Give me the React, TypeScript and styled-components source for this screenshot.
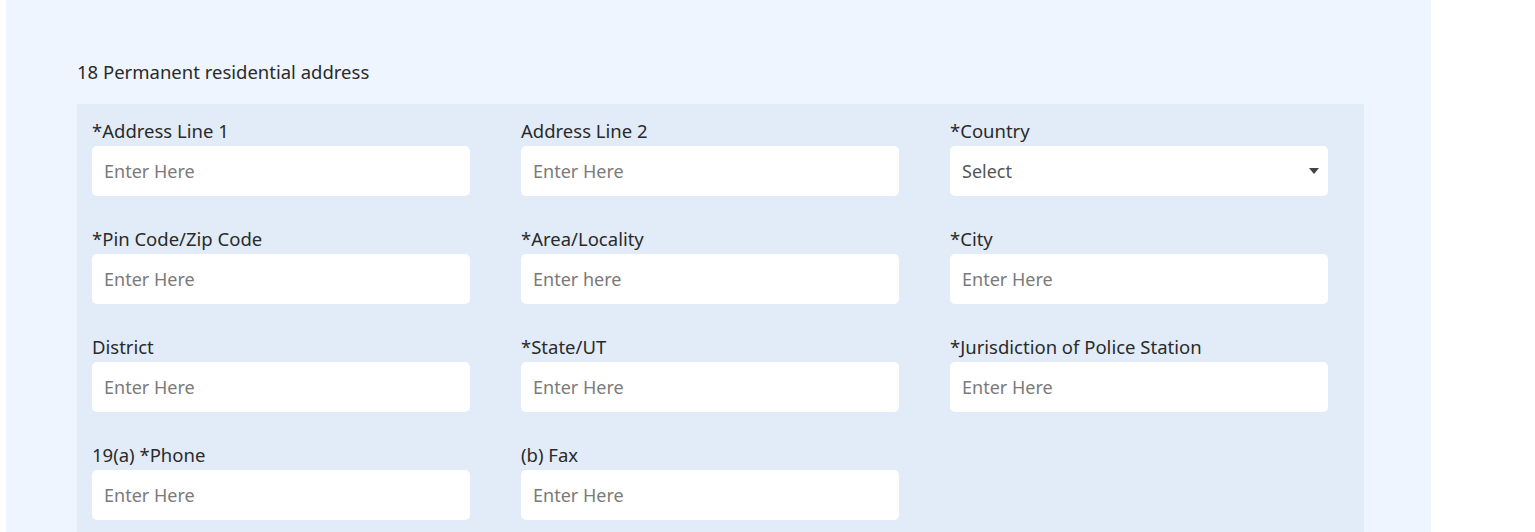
import React from 'react'
import styled, { createGlobalStyle } from 'styled-components'

const GlobalStyle = createGlobalStyle`
  body {
    margin: 0;
    background: #ffffff;
    font-family: "Noto Sans", "Open Sans", sans-serif;
  }
`

const Page = styled.div`
  width: 1425px;
  height: 532px;
  margin-left: 6px;
  background: #eef5fe;
  padding: 59px 0 0 71px;
  box-sizing: border-box;
  overflow: hidden;
`

const SectionTitle = styled.h4`
  margin: 0 0 19px 0;
  font-size: 18.5px;
  font-weight: 400;
  line-height: 26px;
  color: #2a2a2a;
`

const FieldSet = styled.div`
  width: 1287px;
  background: #e2ecf8;
  padding: 15px 0 30px 0;
  display: grid;
  grid-template-columns: repeat(3, 429px);
  row-gap: 31px;
`

const Field = styled.div`
  display: flex;
  flex-direction: column;
  padding: 0 36px 0 15px;
`

const Label = styled.label`
  font-size: 18.5px;
  line-height: 24px;
  color: #2a2a2a;
  margin-bottom: 3px;
`

const Input = styled.input`
  height: 50px;
  border: none;
  border-radius: 5px;
  background: #ffffff;
  padding: 0 12px;
  font-family: inherit;
  font-size: 18px;
  color: #333;
  box-sizing: border-box;
  outline: none;

  &::placeholder {
    color: #7a7a7a;
  }
`

const SelectBox = styled.div`
  height: 50px;
  border-radius: 5px;
  background: #ffffff;
  padding: 0 9px 0 12px;
  display: flex;
  align-items: center;
  justify-content: space-between;
  font-size: 18px;
  color: #555;
  box-sizing: border-box;
`

const Caret = styled.span`
  width: 0;
  height: 0;
  border-left: 5.5px solid transparent;
  border-right: 5.5px solid transparent;
  border-top: 6px solid #444;
`

type FieldDef = { label: string; placeholder?: string; select?: boolean }

const fields: FieldDef[] = [
  { label: '*Address Line 1', placeholder: 'Enter Here' },
  { label: 'Address Line 2', placeholder: 'Enter Here' },
  { label: '*Country', select: true },
  { label: '*Pin Code/Zip Code', placeholder: 'Enter Here' },
  { label: '*Area/Locality', placeholder: 'Enter here' },
  { label: '*City', placeholder: 'Enter Here' },
  { label: 'District', placeholder: 'Enter Here' },
  { label: '*State/UT', placeholder: 'Enter Here' },
  { label: '*Jurisdiction of Police Station', placeholder: 'Enter Here' },
  { label: '19(a) *Phone', placeholder: 'Enter Here' },
  { label: '(b) Fax', placeholder: 'Enter Here' },
]

export default function App() {
  return (
    <>
      <GlobalStyle />
      <Page>
        <SectionTitle>18 Permanent residential address</SectionTitle>
        <FieldSet>
          {fields.map((f) => (
            <Field key={f.label}>
              <Label>{f.label}</Label>
              {f.select ? (
                <SelectBox>
                  <span>Select</span>
                  <Caret />
                </SelectBox>
              ) : (
                <Input placeholder={f.placeholder} />
              )}
            </Field>
          ))}
        </FieldSet>
      </Page>
    </>
  )
}
